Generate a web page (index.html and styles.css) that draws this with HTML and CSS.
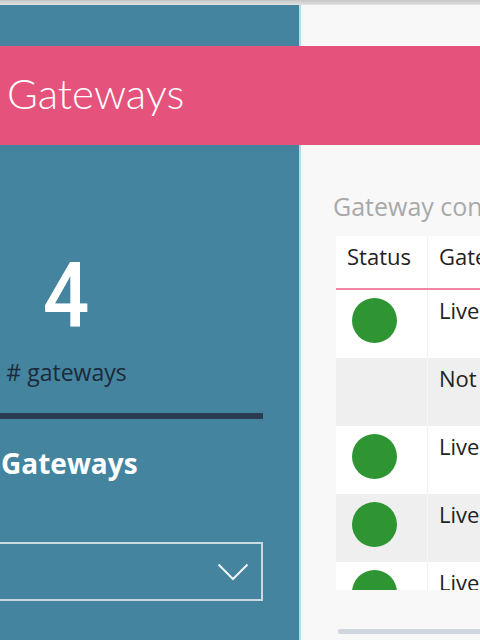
FILE: index.html
```html
<!DOCTYPE html>
<html>
<head>
<meta charset="utf-8">
<link rel="stylesheet" href="styles.css">
</head>
<body>
<div class="app">
  <div class="topbar"></div>
  <div class="side-top"></div>
  <div class="main-top"></div>
  <div class="banner">Gateways</div>
  <div class="side">
    <div class="kpi">
      <div class="kpi-value">4</div>
      <div class="kpi-label"># gateways</div>
    </div>
    <div class="divider"></div>
    <div class="side-title">Gateways</div>
    <div class="dropdown">
      <svg class="chevron" width="32" height="18" viewBox="0 0 32 18"><polyline points="1.5,1.5 16,16 30.5,1.5" fill="none" stroke="#eef4f7" stroke-width="2"/></svg>
    </div>
  </div>
  <div class="main">
    <div class="section-title">Gateway connection status</div>
    <div class="table-wrap">
      <div class="row head">
        <div class="cell c1">Status</div>
        <div class="cell c2">Gateway</div>
      </div>
      <div class="row">
        <div class="cell c1"><span class="dot"></span></div>
        <div class="cell c2">Live</div>
      </div>
      <div class="row alt">
        <div class="cell c1"></div>
        <div class="cell c2">Not connected</div>
      </div>
      <div class="row">
        <div class="cell c1"><span class="dot"></span></div>
        <div class="cell c2">Live</div>
      </div>
      <div class="row alt">
        <div class="cell c1"><span class="dot"></span></div>
        <div class="cell c2">Live</div>
      </div>
      <div class="row">
        <div class="cell c1"><span class="dot"></span></div>
        <div class="cell c2">Live</div>
      </div>
    </div>
    <div class="scrollbar"></div>
  </div>
</div>
</body>
</html>
```

FILE: styles.css
```css
* { box-sizing: border-box; }
html, body {
  margin: 0;
  padding: 0;
  width: 480px;
  height: 640px;
  overflow: hidden;
  background: #f8f8f8;
  font-family: "Open Sans", "Noto Sans", sans-serif;
}
.app {
  display: grid;
  grid-template-columns: 301px 1fr;
  grid-template-rows: 5px 41px 99px 495px;
  width: 480px;
  height: 640px;
  overflow: hidden;
}
.topbar {
  grid-column: 1 / -1;
  background: linear-gradient(#c6c6c6, #e2e2e2);
}
.side-top, .side {
  background: #44849e;
  border-right: 2px solid #b3dcea;
}
.main-top, .main {
  background: #f8f8f8;
}
.banner {
  grid-column: 1 / -1;
  background: #e5527b;
  color: #ffffff;
  font-family: Lato, "Open Sans", sans-serif;
  font-weight: 300;
  font-size: 42px;
  display: flex;
  align-items: center;
  padding-left: 7px;
  padding-bottom: 5px;
  white-space: nowrap;
}
.side {
  overflow: hidden;
}
.kpi {
  width: 132px;
  text-align: center;
  margin-top: 106px;
}
.kpi-value {
  font-family: Roboto, sans-serif;
  font-weight: 500;
  font-size: 91px;
  line-height: 91px;
  color: #ffffff;
  transform: scaleX(0.9);
}
.kpi-label {
  margin-top: 16px;
  font-size: 23px;
  line-height: 28px;
  color: #1c2a3a;
  white-space: nowrap;
  margin-left: 1px;
}
.divider {
  width: 263px;
  height: 6px;
  margin-top: 27px;
  background: #2b3b50;
}
.side-title {
  margin-top: 26px;
  font-weight: 700;
  font-size: 28px;
  line-height: 36px;
  color: #ffffff;
  padding-left: 1px;
}
.dropdown {
  width: 272px;
  height: 59px;
  margin-top: 61px;
  margin-left: -9px;
  border: 2px solid #c9d9e0;
  display: flex;
  justify-content: flex-end;
  align-items: center;
  padding-right: 12px;
}
.chevron {
  display: block;
  margin-top: 1px;
}
.main {
  padding-left: 32px;
  overflow: hidden;
}
.section-title {
  margin-top: 44px;
  font-size: 25px;
  line-height: 34px;
  color: #a9a9a9;
  white-space: nowrap;
}
.table-wrap {
  margin-top: 13px;
  margin-left: 3px;
  width: 400px;
  height: 354px;
  overflow: hidden;
}
.row {
  display: flex;
  height: 68px;
  background: #ffffff;
}
.row.alt {
  background: #efefef;
}
.row.head {
  height: 54px;
  border-bottom: 2px solid #f085a6;
}
.cell {
  font-size: 22px;
  line-height: 30px;
  color: #222;
  white-space: nowrap;
  padding-top: 5px;
  padding-left: 11px;
}
.c1 {
  width: 92px;
  flex: none;
  border-right: 1px solid #f2f2f2;
}
.row.alt .c1 {
  border-right-color: #f7f7f7;
}
.row:not(.head) .c1 {
  padding-left: 16px;
  padding-top: 8px;
}
.c2 {
  flex: 1;
}
.dot {
  display: block;
  width: 45px;
  height: 45px;
  border-radius: 50%;
  background: #2e9532;
}
.scrollbar {
  margin-top: 39px;
  margin-left: 5px;
  height: 5px;
  width: 200px;
  border-radius: 2px;
  background: #cfd6de;
}
```
